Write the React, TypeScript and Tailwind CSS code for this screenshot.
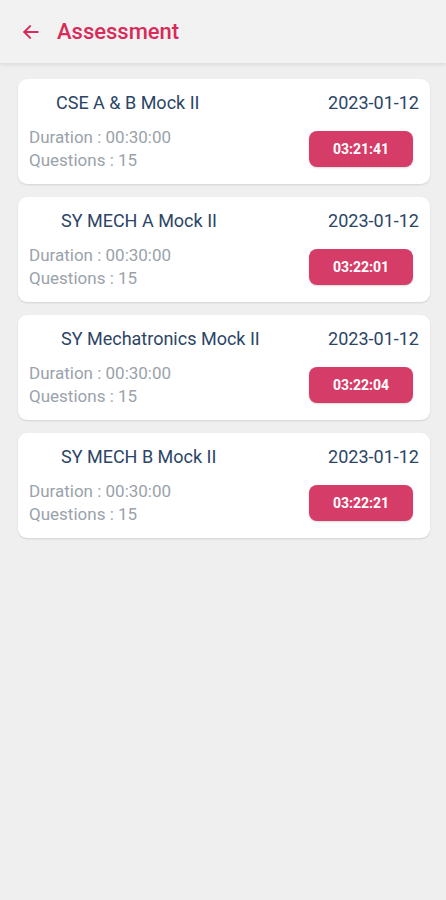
import React from "react";

type Test = { title: string; indent: string; date: string; time: string };

const tests: Test[] = [
  { title: "CSE A & B Mock II", indent: "pl-[27px]", date: "2023-01-12", time: "03:21:41" },
  { title: "SY MECH A Mock II", indent: "pl-[32px]", date: "2023-01-12", time: "03:22:01" },
  { title: "SY Mechatronics Mock II", indent: "pl-[32px]", date: "2023-01-12", time: "03:22:04" },
  { title: "SY MECH B Mock II", indent: "pl-[32px]", date: "2023-01-12", time: "03:22:21" },
];

const TestCard: React.FC<{ test: Test }> = ({ test }) => (
  <div className="rounded-[9px] bg-white pt-3 pb-3 pl-[11px] pr-[11px] shadow-[0_1px_2px_rgba(0,0,0,0.12)]">
    <div className="flex h-[22px] items-center justify-between">
      <div className={`${test.indent} text-[18px] text-[#2c4566]`}>{test.title}</div>
      <div className="text-[18px] text-[#2c4566]">{test.date}</div>
    </div>
    <div className="mt-[13px] flex items-center justify-between">
      <div className="text-[17px] leading-[23px] text-[#9aa2ab]">
        <div>Duration : 00:30:00</div>
        <div>Questions : 15</div>
      </div>
      <div className="mr-[6px] flex h-[36px] w-[104px] items-center justify-center rounded-[8px] bg-[#d63c68] text-[14px] font-bold text-white shadow-[0_1px_2px_rgba(0,0,0,0.15)]">
        {test.time}
      </div>
    </div>
  </div>
);

export default function App() {
  return (
    <div className="min-h-[900px] bg-[#efefef] font-['Roboto',sans-serif]">
      <div className="relative flex h-[63px] items-center bg-[#f2f2f2] shadow-[0_2px_4px_rgba(0,0,0,0.08)]">
        <svg width="20" height="20" viewBox="0 0 24 24" className="ml-[21px]" fill="none" stroke="#d92b5a" strokeWidth="2.4" strokeLinecap="round" strokeLinejoin="round">
          <path d="M20 12H4" />
          <path d="M11 5l-7 7 7 7" />
        </svg>
        <div className="ml-[16px] text-[22px] font-medium text-[#d92b5a]">Assessment</div>
      </div>
      <div className="flex flex-col gap-[13px] px-[18px] pt-[16px] pr-[16px]">
        {tests.map((t) => (
          <TestCard key={t.time} test={t} />
        ))}
      </div>
    </div>
  );
}
